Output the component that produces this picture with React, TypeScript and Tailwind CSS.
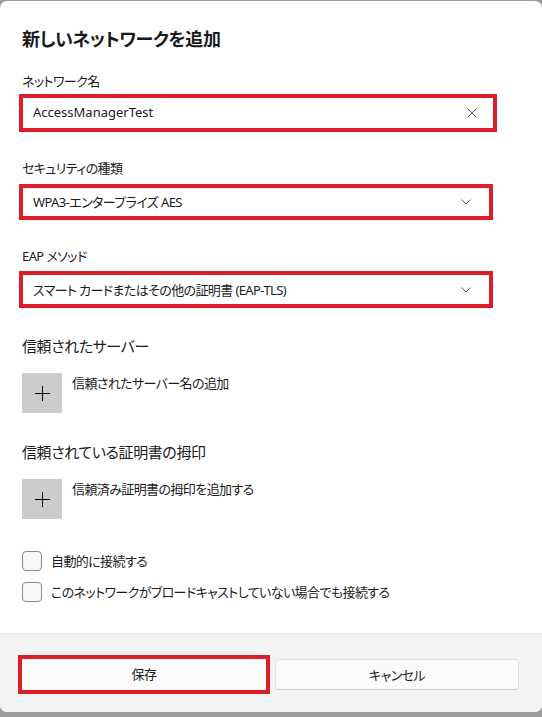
import type { ReactNode } from 'react';

const font = "font-['Segoe_UI','Noto_Sans','Noto_Sans_CJK_JP',sans-serif] [font-feature-settings:'palt']";
const body = 'text-[13px] leading-[20px] tracking-[-0.6px] text-[#1b1b1b]';

function XIcon() {
  return (
    <svg width="10" height="10" viewBox="0 0 10 10" fill="none" stroke="#5c5c5c" strokeWidth="1">
      <path d="M0.5 0.5 L9.5 9.5 M9.5 0.5 L0.5 9.5" />
    </svg>
  );
}

function Chevron() {
  return (
    <svg width="10" height="6" viewBox="0 0 10 6" fill="none" stroke="#5c5c5c" strokeWidth="1">
      <path d="M0.5 0.5 L5 5 L9.5 0.5" />
    </svg>
  );
}

function PlusIcon() {
  return (
    <svg width="15" height="15" viewBox="0 0 15 15" fill="none" stroke="#000000" strokeWidth="1" shapeRendering="crispEdges">
      <path d="M7.5 0 V15 M0 7.5 H15" />
    </svg>
  );
}

function RedBox({ width, height, children }: { width: string; height: string; children: ReactNode }) {
  return (
    <div className={`-ml-[3px] border-4 border-[#dd1d2a] bg-white ${width} ${height}`}>
      <div className="flex h-full items-center justify-between bg-white pl-[10px] pr-[18px]">{children}</div>
    </div>
  );
}

function AddRow({ label }: { label: string }) {
  return (
    <div className="flex items-start gap-[10px]">
      <div className="flex h-[40px] w-[40px] items-center justify-center bg-[#cccccc]">
        <PlusIcon />
      </div>
      <span className={body}>{label}</span>
    </div>
  );
}

function Check({ label }: { label: string }) {
  return (
    <div className="flex items-center gap-[9px]">
      <div className="h-[20px] w-[20px] rounded-[4px] border border-[#8a8a8a] bg-[#f7f7f7]" />
      <span className={body}>{label}</span>
    </div>
  );
}

export default function App() {
  return (
    <div className={`h-[717px] w-[542px] bg-[#9c9c9c] pt-[1px] ${font}`}>
      <div className="flex h-[711px] flex-col overflow-hidden rounded-[7px] bg-white">
        <div className="flex flex-col px-[22px]">
          <h1 className="mt-[25px] text-[18px] font-semibold leading-[26px] tracking-[-0.4px] text-[#1a1a1a]">
            新しいネットワークを追加
          </h1>

          <p className={`mt-[19px] ${body}`}>ネットワーク名</p>
          <div className="mt-[3px]">
            <RedBox width="w-[478px]" height="h-[38px]">
              <span className="text-[13px] text-[#1b1b1b]">AccessManagerTest</span>
              <span className="-mr-[2px]">
                <XIcon />
              </span>
            </RedBox>
          </div>

          <p className={`mt-[26px] ${body}`}>セキュリティの種類</p>
          <div className="mt-[6px]">
            <RedBox width="w-[474px]" height="h-[36px]">
              <span className={body}>WPA3-エンタープライズ AES</span>
              <Chevron />
            </RedBox>
          </div>

          <p className={`mt-[26px] ${body}`}>EAP メソッド</p>
          <div className="mt-[5px]">
            <RedBox width="w-[474px]" height="h-[37px]">
              <span className={body}>スマート カードまたはその他の証明書 (EAP-TLS)</span>
              <Chevron />
            </RedBox>
          </div>

          <h2 className="mt-[27px] text-[15px] leading-[22px] tracking-[-0.4px] text-[#1a1a1a]">信頼されたサーバー</h2>
          <div className="mt-[16px]">
            <AddRow label="信頼されたサーバー名の追加" />
          </div>

          <h2 className="mt-[28px] text-[15px] leading-[22px] tracking-[-0.4px] text-[#1a1a1a]">
            信頼されている証明書の拇印
          </h2>
          <div className="mt-[16px]">
            <AddRow label="信頼済み証明書の拇印を追加する" />
          </div>

          <div className="mt-[32px] flex flex-col gap-[11px]">
            <Check label="自動的に接続する" />
            <Check label="このネットワークがブロードキャストしていない場合でも接続する" />
          </div>
        </div>

        <div className="flex-1" />

        <div className="h-[79px] border-t border-[#e5e5e5] bg-[#f3f3f3] pl-[22px] pr-[23px] pt-[25px]">
          <div className="grid grid-cols-2 gap-[9px]">
            <div className="-m-[4px] border-4 border-[#dd1d2a]">
              <button type="button" className={`flex h-[30px] w-full items-center justify-center bg-[#fbfbfb] ${body}`}>
                保存
              </button>
            </div>
            <button
              type="button"
              className={`flex h-[31px] w-full items-center justify-center rounded-[4px] border border-[#e2e2e2] border-b-[#cfcfcf] bg-[#fbfbfb] ${body}`}
            >
              キャンセル
            </button>
          </div>
        </div>
      </div>
    </div>
  );
}
